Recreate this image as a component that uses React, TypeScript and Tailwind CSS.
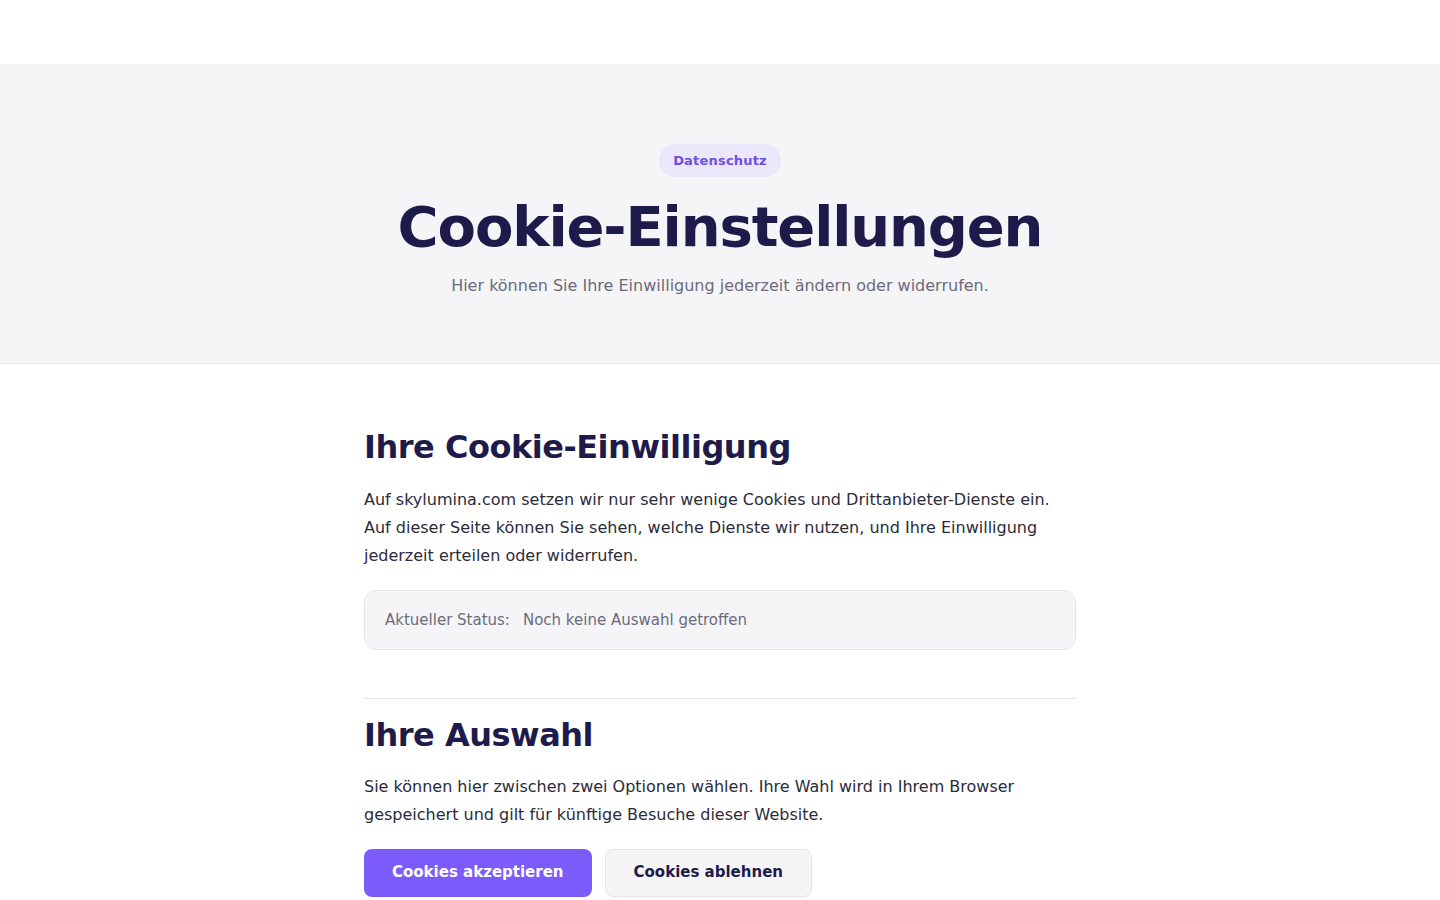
import React from 'react';

export default function App() {
  return (
    <div className="min-h-screen bg-white font-['DejaVu_Sans',sans-serif] text-[#2b2b3a]">
      <header className="h-16 bg-white" />

      <section className="border-b border-[#e4e4ea] bg-[#f5f5f8] pt-20 pb-[65px] text-center">
        <span className="inline-block rounded-full bg-[#ece8fb] px-[14px] py-[7px] text-[13px] font-bold leading-[19px] tracking-[0.015em] text-[#6e4fe6]">
          Datenschutz
        </span>
        <h1 className="mt-[19px] text-[56px] font-bold leading-[1.1] tracking-[-0.02em] text-[#1e1b4b]">
          Cookie-Einstellungen
        </h1>
        <p className="mt-4 text-base leading-6 text-[#6b6b7b]">
          Hier können Sie Ihre Einwilligung jederzeit ändern oder widerrufen.
        </p>
      </section>

      <main className="mx-auto w-[712px] pt-[61px]">
        <h2 className="text-[32px] font-bold leading-[44px] tracking-[-0.015em] text-[#1e1b4b]">
          Ihre Cookie-Einwilligung
        </h2>
        <p className="mt-[17px] text-base leading-7">
          Auf skylumina.com setzen wir nur sehr wenige Cookies und Drittanbieter-Dienste ein. Auf dieser Seite können
          Sie sehen, welche Dienste wir nutzen, und Ihre Einwilligung jederzeit erteilen oder widerrufen.
        </p>

        <div className="mt-5 flex items-center gap-[13px] rounded-xl border border-[#e4e4ea] bg-[#f5f5f8] px-5 py-[17px] text-[15px] leading-6 text-[#6b6b7b]">
          <span>Aktueller Status:</span>
          <span>Noch keine Auswahl getroffen</span>
        </div>

        <hr className="mt-12 border-[#e4e4ea]" />

        <h2 className="mt-[14px] text-[32px] font-bold leading-[44px] tracking-[-0.015em] text-[#1e1b4b]">
          Ihre Auswahl
        </h2>
        <p className="mt-4 text-base leading-7">
          Sie können hier zwischen zwei Optionen wählen. Ihre Wahl wird in Ihrem Browser gespeichert und gilt für
          künftige Besuche dieser Website.
        </p>

        <div className="mt-5 flex gap-[13px]">
          <button className="h-12 rounded-lg bg-[#7b5cfa] px-7 text-[15px] font-bold text-white">
            Cookies akzeptieren
          </button>
          <button className="h-12 rounded-lg border border-[#e4e4ea] bg-[#f5f5f8] px-7 text-[15px] font-bold text-[#1e1b4b]">
            Cookies ablehnen
          </button>
        </div>
      </main>
    </div>
  );
}
